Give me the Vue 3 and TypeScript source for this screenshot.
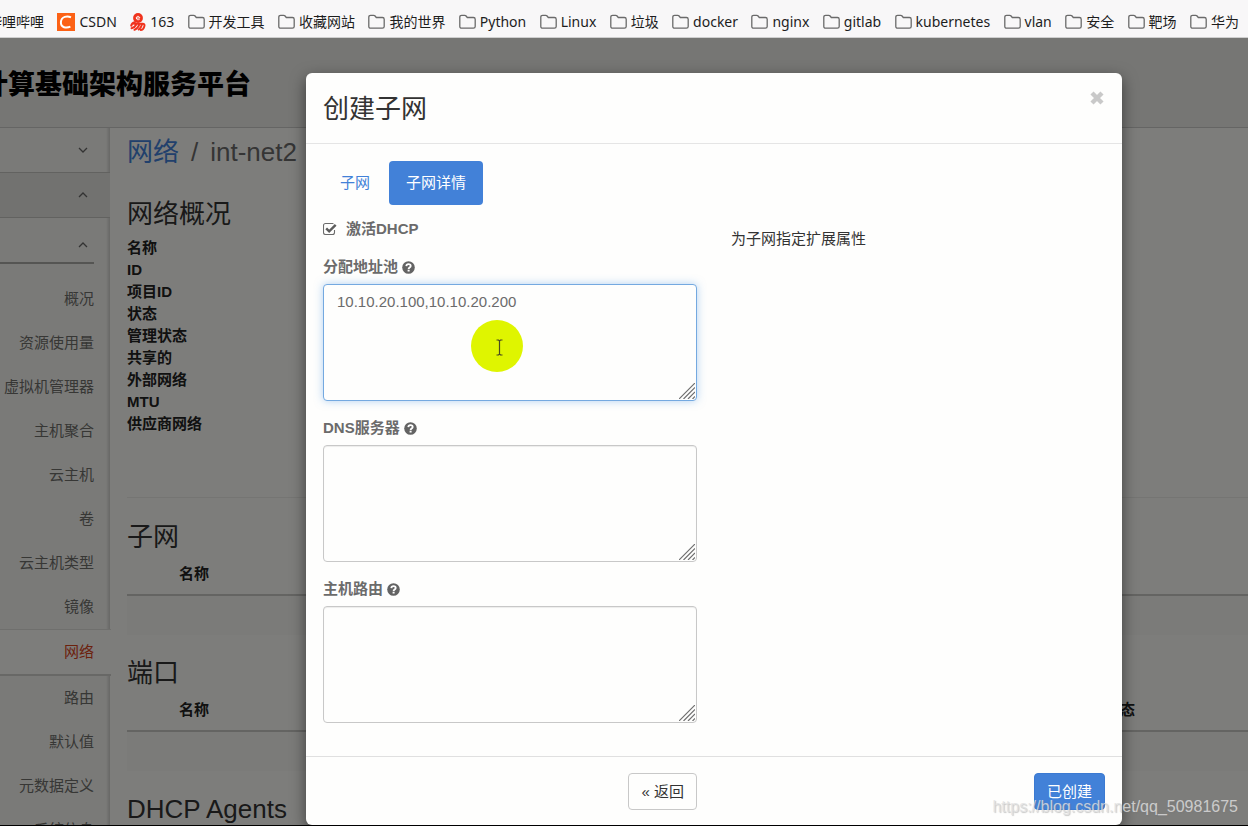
<script setup lang="ts">
import { ref } from 'vue'

interface Bookmark {
  label: string
  icon: 'none' | 'csdn' | 'netease' | 'folder'
}

interface Field {
  id: string
  label: string
  focused: boolean
}

const bookmarks: Bookmark[] = [
  { label: '哔哩哔哩', icon: 'none' },
  { label: 'CSDN', icon: 'csdn' },
  { label: '163', icon: 'netease' },
  ...['开发工具', '收藏网站', '我的世界', 'Python', 'Linux', '垃圾', 'docker', 'nginx', 'gitlab', 'kubernetes', 'vlan', '安全', '靶场', '华为'].map(
    (label): Bookmark => ({ label, icon: 'folder' }),
  ),
]

const menu: string[] = ['概况', '资源使用量', '虚拟机管理器', '主机聚合', '云主机', '卷', '云主机类型', '镜像', '网络', '路由', '默认值', '元数据定义', '系统信息']
const activeMenu = '网络'

const details: string[] = ['名称', 'ID', '项目ID', '状态', '管理状态', '共享的', '外部网络', 'MTU', '供应商网络']

const fields: Field[] = [
  { id: 'pools', label: '分配地址池', focused: true },
  { id: 'dns', label: 'DNS服务器', focused: false },
  { id: 'routes', label: '主机路由', focused: false },
]

const values = ref<Record<string, string>>({ pools: '10.10.20.100,10.10.20.200', dns: '', routes: '' })
const dhcp = ref(true)
</script>

<template>
  <div class="app">
    <nav class="bookmarks">
      <a v-for="b in bookmarks" :key="b.label" href="#" class="bookmark">
        <svg v-if="b.icon === 'csdn'" width="18" height="18" viewBox="0 0 18 18">
          <rect width="18" height="18" fill="#fc6115" />
          <path d="M14 4.300C10.500 2.700 4.300 3.200 3.900 9c-.3 5.800 5.500 6.500 9.500 4.700" fill="none" stroke="#fff" stroke-width="2" />
        </svg>
        <svg v-else-if="b.icon === 'netease'" width="16" height="18" viewBox="0 0 16 18">
          <circle cx="8" cy="5" r="4.900" fill="#f0321c" />
          <path d="M6.300 5h3.400C9.700 2.800 6.300 2.800 6.300 5c0 1.900 2.200 2.100 3.300 1.300" fill="none" stroke="#fff" stroke-width="1" />
          <path d="M4.800 9.300c-2 .5-3.300 1.800-3.600 3.400M3.800 10.800h9.200c1.700 0 1.700 1.400 1.200 3-.6 2-1.700 3.200-3.500 3.200M6.300 11.500c-1 2-2.700 3.300-4.700 3.800M9.300 11.500c-.8 2.500-2.400 4.300-4.800 5.300M12 11.500c-.6 2.200-1.700 4-3.300 5" fill="none" stroke="#f0321c" stroke-width="2" stroke-linecap="round" />
        </svg>
        <svg v-else-if="b.icon === 'folder'" width="17" height="16" viewBox="0 0 17 16">
          <path d="M.8 3.200c0-1.200.7-1.900 1.800-1.900h3.100c.6 0 1 .2 1.400.7l1.200 1.500h6.100c1.100 0 1.800.7 1.800 1.700v7.300c0 1-.7 1.700-1.800 1.700H2.600c-1.100 0-1.800-.7-1.800-1.700z" fill="none" stroke="#6a6a6a" stroke-width="1.300" />
        </svg>
        <span>{{ b.label }}</span>
      </a>
    </nav>

    <div class="page">
      <header class="masthead">
        <div class="brand">计算基础架构服务平台</div>
      </header>

      <div class="columns">
        <aside class="sidebar">
          <button class="group" aria-label="项目">
            <svg width="10" height="6" viewBox="0 0 10 6"><path d="M1 1l4 4 4-4" /></svg>
          </button>
          <button class="group group-open" aria-label="管理员">
            <svg width="10" height="6" viewBox="0 0 10 6"><path d="M1 5l4-4 4 4" /></svg>
          </button>
          <button class="group group-sub" aria-label="系统">
            <svg width="10" height="6" viewBox="0 0 10 6"><path d="M1 5l4-4 4 4" /></svg>
          </button>
          <ul class="menu">
            <li v-for="m in menu" :key="m" :class="{ active: m === activeMenu }">
              <a href="#">{{ m }}</a>
            </li>
          </ul>
        </aside>

        <main class="content">
          <div class="crumbs">
            <a href="#">网络</a><span class="slash">/</span><span>int-net2</span>
          </div>
          <h2 class="overview">网络概况</h2>
          <dl class="details">
            <dt v-for="d in details" :key="d">{{ d }}</dt>
          </dl>
          <hr />
          <h2>子网</h2>
          <table>
            <thead><tr><th>名称</th></tr></thead>
            <tbody><tr><td></td></tr></tbody>
          </table>
          <h2>端口</h2>
          <table>
            <thead><tr><th>名称</th><th class="state">状态</th></tr></thead>
            <tbody><tr><td colspan="2"></td></tr></tbody>
          </table>
          <h2>DHCP Agents</h2>
        </main>
      </div>

      <div class="backdrop">
        <form class="modal" role="dialog" aria-labelledby="dialog-title" @submit.prevent>
          <div class="modal-header">
            <h3 id="dialog-title">创建子网</h3>
            <button type="button" class="close" aria-label="关闭">
              <svg width="16" height="16" viewBox="0 0 16 16"><path d="M3 3l10 10M13 3L3 13" fill="none" stroke="#c9c9c9" stroke-width="4.400" /></svg>
            </button>
          </div>

          <div class="modal-body">
            <div class="tabs">
              <a href="#" class="tab">子网</a>
              <a href="#" class="tab tab-active">子网详情</a>
            </div>
            <div class="halves">
              <div>
                <label class="check" for="dhcp">
                  <span class="box">
                    <input id="dhcp" v-model="dhcp" type="checkbox" />
                    <svg width="14" height="14" viewBox="0 0 14 14">
                      <path d="M11.500 8v2.500a2 2 0 0 1-2 2h-7a2 2 0 0 1-2-2v-7a2 2 0 0 1 2-2h7l1 .2" fill="none" stroke="#6b6b6b" stroke-width="1.100" />
                      <path v-if="dhcp" d="M3.200 6.300l3 3L12.700 2.800" fill="none" stroke="#5c5c5c" stroke-width="2.400" />
                    </svg>
                  </span>
                  <span>激活DHCP</span>
                </label>
                <div v-for="f in fields" :key="f.id" class="field">
                  <label :for="f.id">
                    {{ f.label }}
                    <svg width="13" height="13" viewBox="0 0 13 13">
                      <circle cx="6.500" cy="6.500" r="6.300" fill="#636363" />
                      <path d="M4.300 5.100c.1-1.300.9-2 2.200-2 1.300 0 2.200.7 2.200 1.800 0 1.500-2.100 1.500-2.100 3" fill="none" stroke="#fff" stroke-width="1.800" />
                      <rect x="5.600" y="8.700" width="2" height="1.800" fill="#fff" />
                    </svg>
                  </label>
                  <div class="area">
                    <textarea :id="f.id" v-model="values[f.id]" :class="{ focused: f.focused }" spellcheck="false"></textarea>
                    <svg class="grip" width="16" height="16" viewBox="0 0 16 16">
                      <path d="M0 16L16 0M4.500 16L16 4.500M9 16l7-7M13.500 16l2.500-2.500" fill="none" stroke="#6f6f6f" stroke-width="1.200" />
                    </svg>
                    <svg v-if="f.focused" class="pointer" width="52" height="52" viewBox="0 0 52 52">
                      <circle cx="26" cy="26" r="26" fill="#dff500" />
                      <path d="M25.500 20h2l1 1 1-1h2M28.500 21v13M25.500 35h2l1-1 1 1h2" fill="none" stroke="#4a4a20" stroke-width="1.200" />
                    </svg>
                  </div>
                </div>
              </div>
              <p class="hint">为子网指定扩展属性</p>
            </div>
          </div>

          <div class="modal-footer halves">
            <button type="button" class="btn">« 返回</button>
            <button type="submit" class="btn btn-primary">已创建</button>
          </div>
        </form>
      </div>
    </div>

    <div class="watermark">https://blog.csdn.net/qq_50981675</div>
  </div>
</template>

<style>
body {
  margin: 0;
}
</style>

<style scoped>
.app {
  position: relative;
  display: flex;
  flex-direction: column;
  height: 100vh;
  box-sizing: border-box;
  overflow: hidden;
  border-bottom: 1px solid #000;
  font: 15px/22px "Liberation Sans", "Noto Sans CJK SC", sans-serif;
  color: #333;
}
a {
  text-decoration: none;
}
button {
  font: inherit;
  cursor: pointer;
}
svg {
  display: block;
  flex: none;
}

.bookmarks {
  flex: none;
  display: flex;
  align-items: center;
  justify-content: space-between;
  height: 37px;
  margin-left: -12px;
  padding: 7px 9px 0 0;
  box-sizing: border-box;
  background: #f8f7f8;
  white-space: nowrap;
  font-family: "Noto Sans", "Noto Sans CJK SC", sans-serif;
  font-size: 14px;
}
.bookmark {
  display: flex;
  align-items: center;
  gap: 4px;
  color: #1d1d1d;
}

.page {
  position: relative;
  flex: 1;
  min-height: 0;
  display: flex;
  flex-direction: column;
  overflow: hidden;
  border-top: 1px solid #cfcfcf;
  background: #fbfbf7;
}
.masthead {
  flex: none;
  display: flex;
  align-items: center;
  height: 90px;
  box-sizing: border-box;
  border-bottom: 1px solid #cbcbc8;
  background: #ecece9;
}
.brand {
  margin-left: -19px;
  font: 900 27px/40px LiSu, "Noto Sans CJK SC", sans-serif;
  color: #000;
  white-space: nowrap;
}
.columns {
  flex: 1;
  min-height: 0;
  display: flex;
}

.sidebar {
  flex: none;
  width: 110px;
  background: linear-gradient(to left, #cfcfcc, #f5f5f1 4px);
}
.group {
  display: flex;
  align-items: center;
  justify-content: flex-end;
  width: 100%;
  height: 45px;
  padding: 0 22px 0 0;
  border: 0;
  border-bottom: 1px solid #c4c4c1;
  background: none;
}
.group svg {
  fill: none;
  stroke: #666;
  stroke-width: 1.3;
}
.group-open {
  background: #e4e4e1;
}
.group-sub {
  width: 94px;
  height: 46px;
  padding: 10px 6px 0 0;
  border-bottom: 2px solid #aaaaa7;
}
.menu {
  margin: 0;
  padding: 13px 0 0;
  list-style: none;
  text-align: right;
  white-space: nowrap;
}
.menu a {
  display: block;
  padding: 11px 16px 11px 0;
  color: #6e6e6b;
}
.menu .active {
  margin-right: -1px;
  border-top: 1px solid #dededb;
  border-bottom: 2px solid #d0d0cd;
  background: #fbfbf7;
}
.menu .active a {
  padding-right: 17px;
  color: #d9431a;
}

.content {
  flex: 1;
  min-width: 0;
  padding: 6px 0 0 17px;
}
.crumbs {
  display: flex;
  font-size: 26px;
  line-height: 36px;
  color: #6b6b6b;
}
.crumbs a {
  color: #4281d8;
}
.slash {
  margin: 0 12px;
}
h2,
h3 {
  margin: 0;
  font-size: 26px;
  font-weight: 400;
  line-height: 38px;
  color: #333;
}
h2.overview {
  margin: 25px 0 4px;
}
.details {
  margin: 0;
}
.details dt {
  font-weight: 700;
  color: #222;
}
hr {
  margin: 62px 0 20px;
  border: 0;
  border-top: 1px solid #eaeae6;
}
table {
  width: 100%;
  border-collapse: collapse;
  margin-bottom: 19px;
}
th {
  padding: 7px 0 9px 52px;
  text-align: left;
  color: #222;
}
th.state {
  width: 143px;
  padding-left: 0;
}
thead {
  border-bottom: 2px solid #c8c8c5;
}
td {
  height: 39px;
  padding: 0;
  background: #f6f6f2;
}

.backdrop {
  position: absolute;
  inset: 0;
  display: flex;
  justify-content: center;
  align-items: flex-start;
  padding: 35px 0 0 180px;
  background: rgba(0, 0, 0, 0.5);
}
.modal {
  width: 100%;
  max-width: 816px;
  border-radius: 6px;
  background: #fefefd;
  box-shadow: 0 5px 15px rgba(0, 0, 0, 0.5);
}
.modal-header {
  display: flex;
  justify-content: space-between;
  align-items: flex-start;
  padding: 17px 17px 15px;
  border-bottom: 1px solid #e5e5e5;
}
.close {
  padding: 0;
  border: 0;
  background: none;
}
.modal-body {
  padding: 17px 17px 33px;
}
.tabs {
  display: flex;
  gap: 2px;
}
.tab {
  padding: 11px 17px;
  border-radius: 4px;
  color: #4281d8;
}
.tab-active {
  background: #4281d8;
  color: #fff;
}
.halves {
  display: grid;
  grid-template-columns: 1fr 1fr;
  column-gap: 34px;
}
.check {
  display: flex;
  align-items: center;
  gap: 9px;
  margin: 13px 0 16px;
  font-weight: 700;
  color: #6b6b6b;
}
.box {
  position: relative;
}
.box input {
  position: absolute;
  inset: 0;
  margin: 0;
  opacity: 0;
}
.field {
  margin-bottom: 16px;
}
.field:last-child {
  margin-bottom: 0;
}
.field label {
  display: flex;
  align-items: center;
  gap: 4px;
  margin-bottom: 6px;
  font-weight: 700;
  color: #6b6b6b;
}
.area {
  position: relative;
}
textarea {
  display: block;
  width: 100%;
  height: 117px;
  box-sizing: border-box;
  padding: 6px 13px;
  border: 1px solid #c8c8c8;
  border-radius: 4px;
  outline: 0;
  resize: none;
  background: #fefefd;
  box-shadow: inset 0 1px 1px rgba(0, 0, 0, 0.07);
  font: inherit;
  color: #6b6b6b;
}
textarea.focused {
  border-color: #74a9e0;
  box-shadow: 0 0 8px rgba(102, 165, 233, 0.5);
}
.grip {
  position: absolute;
  right: 2px;
  bottom: 2px;
}
.pointer {
  position: absolute;
  left: 148px;
  top: 36px;
}
.hint {
  margin: 23px 0 0;
}
.modal-footer {
  justify-items: end;
  padding: 16px 17px 15px;
  border-top: 1px solid #e0e0e0;
}
.btn {
  padding: 7px 12px 6px;
  border: 1px solid #c8c8c8;
  border-radius: 4px;
  background: #fefefd;
  color: #333;
}
.btn-primary {
  border-color: #3b7ad2;
  background: #4281d8;
  color: #fff;
}

.watermark {
  position: absolute;
  right: 10px;
  bottom: 7px;
  font-size: 16px;
  color: rgba(225, 225, 225, 0.8);
  text-shadow: 1px 1px 1px rgba(120, 120, 120, 0.4);
}
</style>
